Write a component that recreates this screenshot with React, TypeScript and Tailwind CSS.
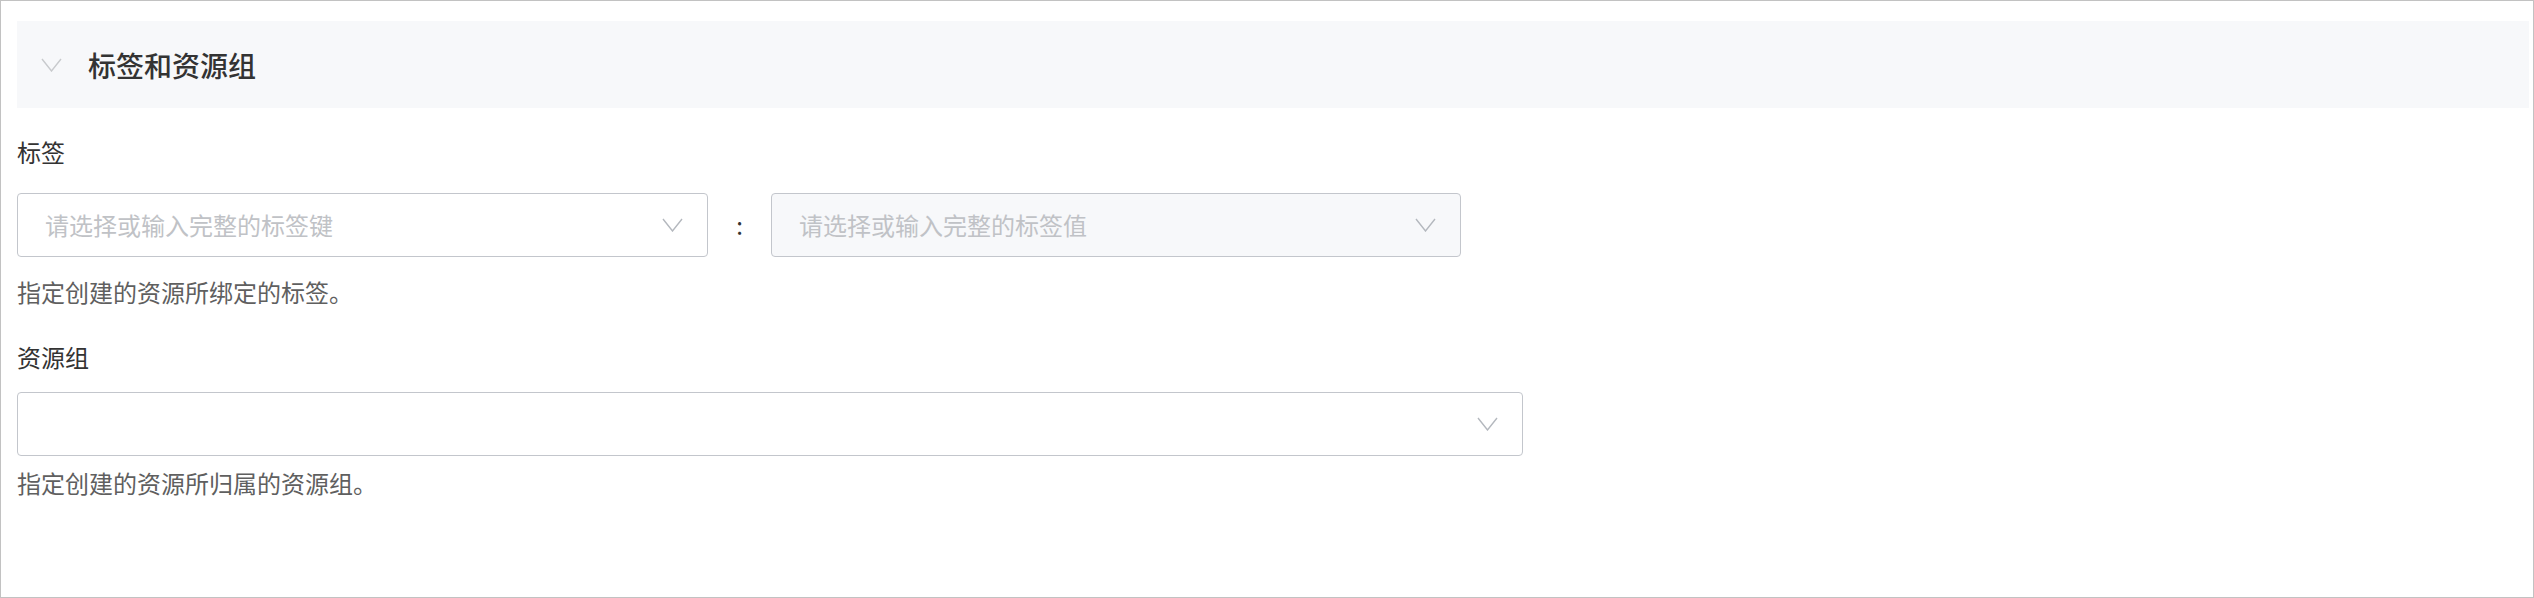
const Chevron = ({ className }: { className?: string }) => (
  <svg width="21" height="14" viewBox="0 0 21 14" fill="none" className={className}>
    <polyline points="1,1 10.5,13 20,1" stroke="currentColor" strokeWidth="1.4" />
  </svg>
);

function SelectBox({ placeholder, disabled, width }: { placeholder?: string; disabled?: boolean; width: string }) {
  return (
    <div
      className={`${width} h-[64px] rounded-[4px] border border-[#c3c6cc] flex items-center pl-[27px] pr-[24px] ${
        disabled ? 'bg-[#f7f8fa]' : 'bg-white'
      }`}
    >
      <span className="flex-1 text-[24px] leading-[36px] text-[#c0c2c6]">{placeholder}</span>
      <Chevron className="text-[#b4b8be]" />
    </div>
  );
}

export default function App() {
  return (
    <div className="w-[2534px] h-[598px] border border-[#c2c2c2] bg-white font-['Noto_Sans_CJK_SC','Noto_Sans',sans-serif]">
      <div className="ml-4 mr-1 mt-5 h-[87px] bg-[#f7f8fa] flex items-center">
        <Chevron className="ml-[24px] text-[#c8cacd]" />
        <span className="ml-[26px] text-[28px] font-medium text-[#333]">标签和资源组</span>
      </div>

      <div className="px-4 flex flex-col">
        <div className="mt-[26px] text-[24px] leading-[36px] text-[#333]">标签</div>
        <div className="mt-[23px] flex items-center">
          <SelectBox placeholder="请选择或输入完整的标签键" width="w-[691px]" />
          <span className="w-[63px] text-center text-[24px] leading-[36px] text-[#333]">:</span>
          <SelectBox placeholder="请选择或输入完整的标签值" disabled width="w-[690px]" />
        </div>
        <div className="mt-[17px] text-[24px] leading-[36px] text-[#5f5f5f]">指定创建的资源所绑定的标签。</div>

        <div className="mt-[29px] text-[24px] leading-[36px] text-[#333]">资源组</div>
        <div className="mt-[17px] flex">
          <SelectBox width="w-[1506px]" />
        </div>
        <div className="mt-[9px] text-[24px] leading-[36px] text-[#5f5f5f]">指定创建的资源所归属的资源组。</div>
      </div>
    </div>
  );
}
